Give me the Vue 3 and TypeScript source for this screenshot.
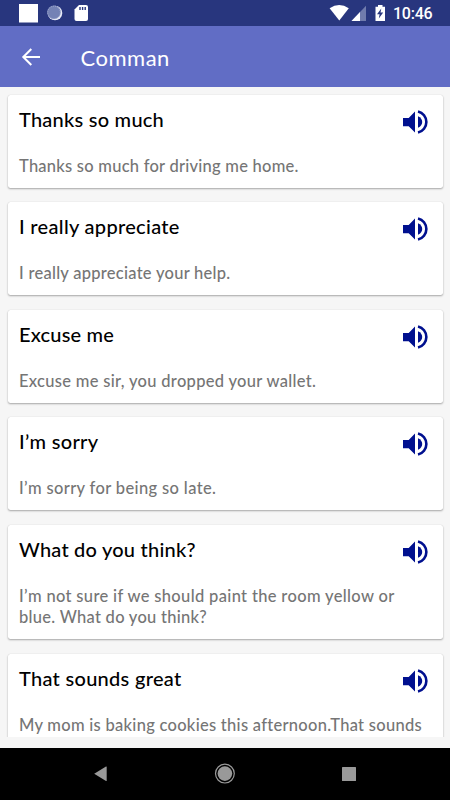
<script setup lang="ts">
interface Line {
  text: string
  spacing: number
}

interface Phrase {
  title: Line
  lines: Line[]
}

const phrases: Phrase[] = [
  {
    title: { text: 'Thanks so much', spacing: 0.24 },
    lines: [{ text: 'Thanks so much for driving me home.', spacing: 0.24 }],
  },
  {
    title: { text: 'I really appreciate', spacing: 0.31 },
    lines: [{ text: 'I really appreciate your help.', spacing: 0.27 }],
  },
  {
    title: { text: 'Excuse me', spacing: 0.18 },
    lines: [{ text: 'Excuse me sir, you dropped your wallet.', spacing: 0.31 }],
  },
  {
    title: { text: 'I’m sorry', spacing: 0.3 },
    lines: [{ text: 'I’m sorry for being so late.', spacing: 0.36 }],
  },
  {
    title: { text: 'What do you think?', spacing: 0.22 },
    lines: [
      { text: 'I’m not sure if we should paint the room yellow or', spacing: 0.34 },
      { text: 'blue. What do you think?', spacing: 0.27 },
    ],
  },
  {
    title: { text: 'That sounds great', spacing: 0.29 },
    lines: [{ text: 'My mom is baking cookies this afternoon.That sounds', spacing: 0.28 }],
  },
]
</script>

<template>
  <div class="screen">
    <header class="status">
      <svg class="status-left" width="90" height="26" viewBox="0 0 90 26">
        <rect x="19" y="4" width="19" height="18.500" fill="#fff" />
        <circle cx="55" cy="13" r="7.300" fill="#e9ecf7" />
        <circle cx="53.900" cy="12.300" r="6.700" fill="#7482b5" />
        <circle cx="54" cy="12.500" r="6.300" fill="none" stroke="#a0aad0" stroke-width="1" stroke-dasharray="1 1" />
        <path d="M79 5h7q2 0 2 2v12q0 2-2 2H76.500q-2 0-2-2V9.500z" fill="#fff" />
        <path d="M80 7v3M82.600 7v3M85.200 7v3" stroke="#28367e" stroke-width="1.400" />
      </svg>
      <svg class="status-right" width="60" height="26" viewBox="328 0 60 26">
        <path d="M329.600 8.300Q339.200 1.800 348.800 8.300L339.300 20.500z" fill="#fff" />
        <path d="M366 5.700V21h-14.500z" fill="#707bad" />
        <path d="M360 12V21h-8.500z" fill="#fff" />
        <path d="M378 5h4.500v1.700h2.500v14.300h-9.500V6.700H378z" fill="#fff" />
        <path d="M381.300 8.500l-4.300 5.800h2.600l-.8 4.300 4.400-6h-2.700z" fill="#28367e" />
      </svg>
      <span class="clock">10:46</span>
    </header>
    <div class="toolbar">
      <svg width="20" height="20" viewBox="0 0 20 20">
        <path d="M10.300 2L2.300 10l8 8M2.300 10H19" fill="none" stroke="#fff" stroke-width="2" />
      </svg>
      <h1>Comman</h1>
    </div>
    <main class="list">
      <article v-for="phrase in phrases" :key="phrase.title.text" class="card">
        <div class="head">
          <h2 :style="{ letterSpacing: phrase.title.spacing + 'px' }">{{ phrase.title.text }}</h2>
          <svg class="speaker" width="26" height="26" viewBox="0 0 26 26">
            <path d="M1 9h5.700L13 2.500v21L6.700 17.300H1z" fill="#00108f" />
            <path d="M16 7.200q4.200 2 4.200 5.800T16 18.800z" fill="#00108f" />
            <path d="M16 2.400a10.900 10.900 0 0 1 0 21.200" fill="none" stroke="#00108f" stroke-width="2.600" />
          </svg>
        </div>
        <p>
          <span v-for="line in phrase.lines" :key="line.text" :style="{ letterSpacing: line.spacing + 'px' }">{{ line.text }}</span>
        </p>
      </article>
    </main>
    <nav class="navbar">
      <svg width="450" height="52" viewBox="0 748 450 52">
        <path d="M94.200 773.700L106 766.500q.7-.3.700.5v13.500q0 .8-.7.500z" fill="#999" />
        <circle cx="224.900" cy="773.600" r="7.300" fill="#999" />
        <circle cx="224.900" cy="773.600" r="9.400" fill="none" stroke="#999" stroke-width="1.200" />
        <rect x="342" y="767" width="14" height="14" rx=".5" fill="#999" />
      </svg>
    </nav>
  </div>
</template>

<style>
body {
  margin: 0;
  overflow: hidden;
}
</style>

<style scoped>
.screen {
  width: 450px;
  height: 800px;
  display: flex;
  flex-direction: column;
  background: #f6f6f6;
  font-family: Lato, "Open Sans", sans-serif;
  overflow: hidden;
}
.status {
  height: 26px;
  flex: none;
  display: flex;
  background: #28367e;
  color: #fff;
}
.status-left {
  flex: none;
}
.status-right {
  margin-left: 238px;
  flex: none;
}
.clock {
  margin-left: 5px;
  font: 500 16px/28px Roboto, sans-serif;
  letter-spacing: -0.25px;
  white-space: nowrap;
}
.toolbar {
  height: 61px;
  flex: none;
  box-sizing: border-box;
  display: flex;
  align-items: center;
  padding-left: 21px;
  background: #616dc5;
  color: #fff;
}
h1 {
  margin: 2px 0 0 39.500px;
  font-size: 22px;
  line-height: 28px;
  font-weight: 400;
  letter-spacing: 0.5px;
}
.list {
  height: 650px;
  flex: none;
  box-sizing: border-box;
  padding: 7.500px 7.500px 0;
  display: flex;
  flex-direction: column;
  gap: 14.600px;
  overflow: hidden;
}
.card {
  flex: none;
  box-sizing: border-box;
  min-height: 93px;
  padding: 11px 14.500px 10.500px 11.500px;
  background: #fff;
  border-radius: 2.500px;
  box-shadow: 0 1px 2px rgba(0, 0, 0, 0.32), 0 0 1px rgba(0, 0, 0, 0.14);
}
.head {
  display: flex;
  justify-content: space-between;
  height: 50px;
}
h2 {
  margin: 0;
  font-size: 20px;
  line-height: 27px;
  font-weight: 500;
  color: #000;
  white-space: nowrap;
}
.speaker {
  margin-top: 3px;
}
p {
  margin: 0;
  font-size: 16.500px;
  line-height: 21.500px;
  font-weight: 500;
  color: #757575;
  white-space: nowrap;
}
p span {
  display: block;
}
.navbar {
  height: 52px;
  margin-top: 11px;
  flex: none;
  background: #000;
}
.navbar svg {
  display: block;
}
</style>
